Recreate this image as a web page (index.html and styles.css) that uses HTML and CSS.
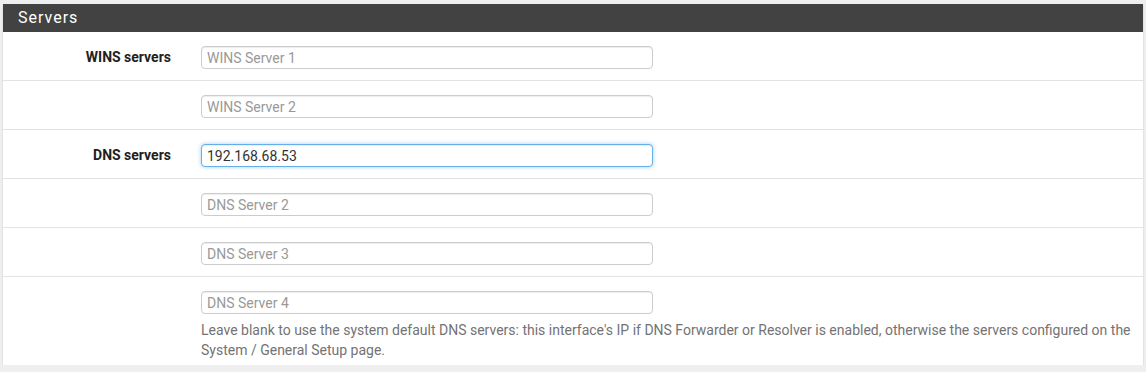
FILE: index.html
```html
<!DOCTYPE html>
<html>
<head>
  <title>Servers</title>
  <link rel="stylesheet" href="styles.css">
</head>
<body>
  <div class="panel">
    <div class="panel-heading">Servers</div>
    <div class="panel-body">
      <div class="form-group">
        <label class="form-label">WINS servers</label>
        <div class="form-field">
          <input type="text" class="form-control" placeholder="WINS Server 1">
        </div>
      </div>
      <div class="form-group">
        <label class="form-label"></label>
        <div class="form-field">
          <input type="text" class="form-control" placeholder="WINS Server 2">
        </div>
      </div>
      <div class="form-group">
        <label class="form-label">DNS servers</label>
        <div class="form-field">
          <input type="text" class="form-control is-focused" value="192.168.68.53" autofocus>
        </div>
      </div>
      <div class="form-group">
        <label class="form-label"></label>
        <div class="form-field">
          <input type="text" class="form-control" placeholder="DNS Server 2">
        </div>
      </div>
      <div class="form-group">
        <label class="form-label"></label>
        <div class="form-field">
          <input type="text" class="form-control" placeholder="DNS Server 3">
        </div>
      </div>
      <div class="form-group last">
        <label class="form-label"></label>
        <div class="form-field">
          <input type="text" class="form-control" placeholder="DNS Server 4">
          <p class="help-block">Leave blank to use the system default DNS servers: this interface's IP if DNS Forwarder or Resolver is enabled, otherwise the servers configured on the System / General Setup page.</p>
        </div>
      </div>
    </div>
  </div>
</body>
</html>
```

FILE: styles.css
```css
/* Page */
body {
  margin: 0;
  padding: 4px 3px 0 3px;
  background: #efefef;
  font-family: Roboto, "Liberation Sans", sans-serif;
  font-size: 14px;
  color: #212121;
}

/* Panel */
.panel {
  background: white;
  box-shadow: 0 1px 2px rgba(0,0,0,0.15);
}

.panel-heading {
  background: #424242;
  color: white;
  height: 28px;
  line-height: 28px;
  padding-left: 15px;
  font-size: 16px;
  letter-spacing: 1px;
}

/* Form rows */
.form-group {
  display: grid;
  grid-template-columns: 183px 1fr;
  padding: 14px 0 11px;
  border-bottom: 1px solid #e2e2e2;
}

.form-group.last {
  border-bottom: none;
  padding-bottom: 5px;
}

.form-label {
  text-align: right;
  padding-right: 15px;
  font-weight: bold;
  line-height: 23px;
}

.form-field {
  padding-left: 15px;
}

.form-control {
  display: block;
  box-sizing: border-box;
  width: 452px;
  height: 23px;
  margin: 0;
  padding: 0 5px;
  border: 1px solid #cccccc;
  border-radius: 4px;
  font-family: inherit;
  font-size: 14px;
  color: #333;
  background: white;
  box-shadow: inset 0 1px 1px rgba(0,0,0,0.075);
  outline: none;
}

.form-control::placeholder {
  color: #999;
}

.form-control.is-focused {
  border-color: #66afe9;
  box-shadow: inset 0 1px 1px rgba(0,0,0,0.075), 0 0 4px rgba(102,175,233,0.6);
}

.help-block {
  margin: 6px 0 0;
  width: 940px;
  line-height: 20px;
  color: #737373;
}
```
